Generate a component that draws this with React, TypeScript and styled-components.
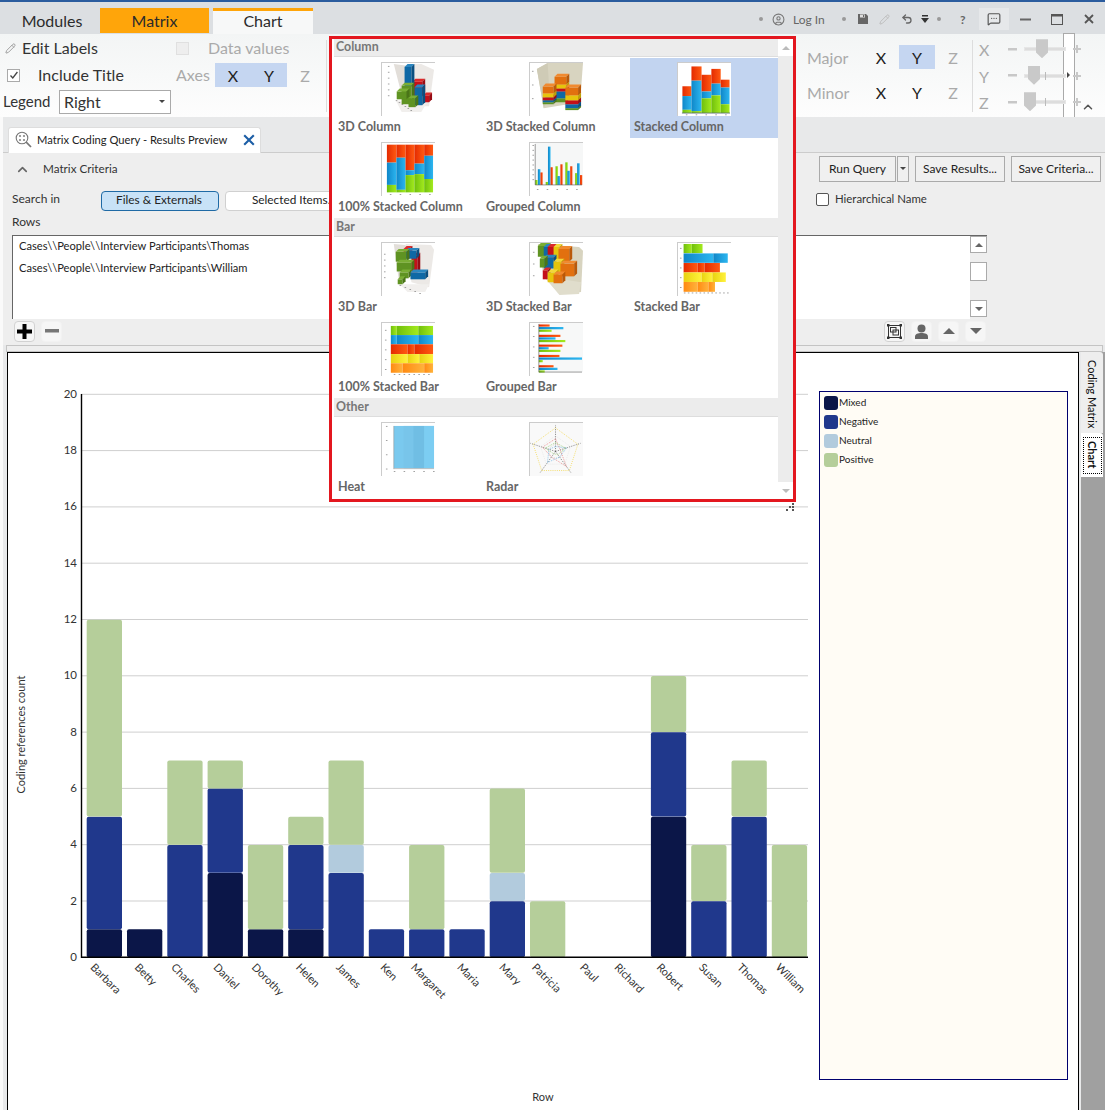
import React from "react";
import styled, { createGlobalStyle } from "styled-components";
import { Pencil, CircleUser, MessageSquareMore, Undo2, ChevronUp } from "lucide-react";

const Global = createGlobalStyle`
  html, body { margin: 0; padding: 0; background: #fff; }
  * { box-sizing: border-box; }
  body { font-family: Lato, "Open Sans", sans-serif; color: #222; }
`;

const Page = styled.div`
  position: relative; width: 1105px; height: 1110px; overflow: hidden;
  display: flex; flex-direction: column; background: #fff;
`;

/* ---------- title bar ---------- */
const TitleBar = styled.div`
  height: 34px; flex: none; display: flex; align-items: flex-end; justify-content: space-between;
  background: #dcdfe2; border-top: 2px solid #2b5c9e;
`;
const Tabs = styled.div`display: flex; align-items: flex-end;`;
const ModuleTab = styled.div<{ $kind?: "plain" | "context" | "active" }>`
  height: ${p => (p.$kind === "active" ? 26 : 25)}px;
  width: ${p => (p.$kind === "context" ? 109 : 100)}px;
  margin-right: ${p => (p.$kind === "context" ? 4 : 0)}px;
  margin-bottom: ${p => (p.$kind === "active" ? 0 : 1)}px;
  padding-bottom: ${p => (p.$kind === "active" ? 4 : 0)}px;
  padding-left: ${p => (p.$kind ? 0 : 4)}px;
  display: flex; align-items: center; justify-content: center;
  font-size: 16px; color: #2b2b2b;
  background: ${p => (p.$kind === "context" ? "#ffa50a" : p.$kind === "active" ? "#f7f8f8" : "transparent")};
  border-top: ${p => (p.$kind === "active" ? "3px solid #ffa50a" : "none")};
`;
const QuickBar = styled.div`
  display: flex; align-items: center; height: 32px; padding-top: 2px; color: #777;
`;
const Dot = styled.span<{ $l?: number; $r?: number }>`
  width: 4px; height: 4px; border-radius: 50%; background: #999;
  margin-left: ${p => p.$l ?? 0}px; margin-right: ${p => p.$r ?? 0}px;
`;
const LogIn = styled.span`font-size: 12px; color: #666; margin-left: 8px; width: 33px;`;
const Help = styled.span`font-size: 12px; font-weight: 700; color: #666; width: 8px; margin: 0 11px 0 19px;`;
const ChatBox = styled.span`
  width: 30px; height: 22px; background: #e6e8ea; display: flex; align-items: center; justify-content: center;
`;
const WinBtn = styled.span`width: 32px; display: flex; justify-content: center; align-items: center; color: #555;`;
const QuickIcon = styled.span<{ $w: number }>`width: ${p => p.$w}px; display: flex; justify-content: center; align-items: center;`;

/* ---------- ribbon ---------- */
const Ribbon = styled.div`
  position: relative; height: 83px; flex: none; display: flex;
  background: linear-gradient(#f3f5f5, #fdfdfd);
`;
const LeftGroup = styled.div`
  width: 327px; display: grid; grid-template-columns: 176px 1fr; grid-template-rows: 29px 24px 30px;
  position: relative;
`;
const RibbonCell = styled.div<{ $pl?: number }>`
  display: flex; align-items: center; padding-left: ${p => p.$pl ?? 0}px; font-size: 16px; color: #333;
`;
const LabelText = styled.span<{ $off?: boolean; $ml?: number; $w?: number; $size?: number }>`
  font-size: ${p => p.$size ?? 16}px; color: ${p => (p.$off ? "#aaa" : "#333")}; margin-left: ${p => p.$ml ?? 0}px;
  padding-bottom: 2px;
  ${p => (p.$w ? `width: ${p.$w}px;` : "")}
`;
const RibbonCheck = styled.span<{ $off?: boolean }>`
  width: 13px; height: 13px; flex: none; display: flex; align-items: center; justify-content: center;
  background: ${p => (p.$off ? "#eeeeee" : "#fff")}; border: 1px solid ${p => (p.$off ? "#e0e0e0" : "#aaa")};
`;
const SelectBox = styled.div`
  width: 112px; height: 24px; margin-left: 7px; padding: 0 5px 2px 4px; border: 1px solid #aaa; background: #fff;
  display: flex; align-items: center; justify-content: space-between; font-size: 16px; color: #333;
`;
const Caret = styled.span<{ $up?: boolean; $c?: string; $s?: number }>`
  width: 0; height: 0; display: inline-block;
  border-left: ${p => p.$s ?? 3}px solid transparent; border-right: ${p => p.$s ?? 3}px solid transparent;
  ${p => (p.$up ? `border-bottom: ${p.$s ?? 3}px solid ${p.$c ?? "#444"};` : `border-top: ${p.$s ?? 3}px solid ${p.$c ?? "#444"};`)}
`;
const AxisCell = styled.span<{ $on?: boolean; $off?: boolean }>`
  width: 36px; height: 24px; display: flex; align-items: center; justify-content: center; font-size: 16px;
  color: ${p => (p.$off ? "#aaa" : "#222")}; background: ${p => (p.$on ? "#c5d6f1" : "transparent")};
`;
const GroupSep = styled.span`position: absolute; right: 0; top: 6px; bottom: 5px; width: 1px; background: #ddd;`;
const MajorGroup = styled.div`
  margin: 6px 0 0 480px; width: 166px; height: 72px; padding-top: 5px; display: flex; flex-direction: column; gap: 11px;
  border-right: 1px solid #ddd;
`;
const MajorRow = styled.div`display: flex; align-items: center; height: 24px;`;
const MajorLabel = styled.span`width: 56px; font-size: 16px; color: #aaa;`;
const SliderGroup = styled.div`
  margin-left: 6px; display: flex; flex-direction: column; padding-top: 2px;
`;
const SliderRow = styled.div`display: flex; align-items: center; height: 26.5px; position: relative;`;
const SliderAxis = styled.span`width: 14px; font-size: 16px; color: #aaa; line-height: 1; padding-top: 2px;`;
const SliderGlyph = styled.svg<{ $ml: number }>`flex: none; margin-left: ${p => p.$ml}px;`;
const Track = styled.span`
  position: relative; display: block; flex: none; width: 42px; height: 4px; margin-left: 7px; background: #ddd; border: 1px solid #e6e6e6;
`;
const Knob = styled.span<{ $at: number }>`
  position: absolute; left: ${p => p.$at}px; top: -9px; width: 12px; height: 19px; background: #c9c9c9;
  clip-path: polygon(0 0, 100% 0, 100% 70%, 50% 100%, 0 70%);
`;
const TickMark = styled.span`position: absolute; left: 20px; top: -3px; width: 1px; height: 8px; background: #bbb;`;
const StripOverlay = styled.span`
  position: absolute; left: 1063px; top: -1px; bottom: 0; width: 12px; background: #fff;
  border-left: 1px solid #aaa; border-right: 1px solid #aaa; border-top: 1px solid #aaa;
`;
const RibbonCollapse = styled.span`position: absolute; left: 1081px; top: 66px; color: #555; display: flex;`;
const SmallArrow = styled.span`
  position: absolute; left: 1067px; top: 38px; width: 0; height: 0;
  border-top: 3px solid transparent; border-bottom: 3px solid transparent; border-left: 3px solid #444;
`;

/* ---------- body ---------- */
const Body = styled.div`
  flex: 1; min-height: 0; display: flex; flex-direction: column; background: #e8e9ea;
  border-left: 3px solid #fafafa;
`;
const TabStrip = styled.div`
  height: 36px; flex: none; display: flex; align-items: flex-end; padding-left: 5px;
  border-bottom: 1px solid #ccc;
`;
const DocTab = styled.div`
  width: 253px; height: 26px; margin-bottom: -1px; background: #fff; border: 1px solid #ddd; border-bottom: none;
  border-radius: 3px 3px 0 0; display: flex; align-items: center; padding: 0 5px 2px 6px; font-size: 11.2px; color: #222;
`;
const DocTitle = styled.span`margin-left: 5px; flex: 1; white-space: nowrap;`;
const Criteria = styled.div`height: 192px; flex: none; background: #eee; display: flex; flex-direction: column;`;
const CritHeader = styled.div`
  height: 36px; flex: none; display: flex; align-items: center; padding: 0 4px 4px 12px; font-size: 11.7px; color: #333;
`;
const CritTitle = styled.span`margin-left: 13px; flex: 1; padding-bottom: 2px;`;
const ActionButton = styled.button<{ $w: number; $ml?: number }>`
  width: ${p => p.$w}px; height: 26px; margin-left: ${p => p.$ml ?? 0}px; padding: 0 0 2px; background: #f0f0f0; border: 1px solid #aaa;
  font: 12px Lato, sans-serif; color: #222; display: flex; align-items: center; justify-content: center;
`;
const SearchRow = styled.div`height: 22px; flex: none; padding: 1px 0 0 9px; display: flex; align-items: center; font-size: 12px; color: #333;`;
const SearchLabel = styled.span`width: 89px; padding-bottom: 4px;`;
const ScopeBtn = styled.button<{ $on?: boolean; $ml?: number }>`
  width: ${p => (p.$on ? 118 : 140)}px; height: 20px; border-radius: 4px; margin-left: ${p => p.$ml ?? 0}px; padding: 0 2px 4px 0;
  font: 11.8px Lato, sans-serif; color: #222; text-align: center;
  background: ${p => (p.$on ? "#c8e2f7" : "#fff")}; border: 1px solid ${p => (p.$on ? "#1f6aa5" : "#d0d0d0")};
`;
const HierCheck = styled.span`
  margin: 0 0 3px 451px; width: 13px; height: 13px; border: 1px solid #555; border-radius: 2px; background: #fff; flex: none;
`;
const HierLabel = styled.span`margin-left: 6px; font-size: 11.4px; padding-bottom: 4px;`;
const RowsLabel = styled.div`height: 24px; flex: none; display: flex; align-items: center; padding: 0 0 4px 9px; font-size: 12px; color: #333;`;
const RowsBox = styled.div`
  height: 84px; flex: none; width: 975px; margin-left: 9px; background: #fff; border-top: 1px solid #666; border-left: 1px solid #666;
  display: flex;
`;
const RowsList = styled.div`flex: 1; padding: 2px 6px; font-size: 11.15px; color: #222; display: flex; flex-direction: column; gap: 7px; line-height: 15px;`;
const RowsScroll = styled.div`width: 17px; background: #eee; display: flex; flex-direction: column; align-items: center; padding-bottom: 2px;`;
const ScrollBtn = styled.span<{ $h?: number; $mt?: number }>`
  width: 17px; height: ${p => p.$h ?? 17}px; margin-top: ${p => p.$mt ?? 0}px; background: #fff; border: 1px solid #aaa; display: flex; align-items: center; justify-content: center;
`;
const Toolbar = styled.div`height: 23px; flex: none; display: flex; align-items: center; padding: 1px 0 0 11px;`;
const ToolBtn = styled.span<{ $on?: boolean; $ml?: number }>`
  width: 21px; height: 21px; margin-left: ${p => p.$ml ?? 0}px; border-radius: 4px; background: #f6f6f6;
  border: 1px solid ${p => (p.$on ? "#d2d2d2" : "#f2f2f2")}; display: flex; align-items: center; justify-content: center;
`;
const Splitter = styled.div`height: 7px; flex: none; margin: 0 2px 0 3px; background: #eee; border: 1px solid #c4c4c4;`;
const ChartRow = styled.div`flex: 1; min-height: 0; display: flex; padding-left: 4px;`;
const ChartFrame = styled.div`
  width: 1072px; flex: none; background: #fff; border: 1px solid #000; border-bottom: none; display: flex; align-items: flex-start;
`;
const ChartSvg = styled.svg`display: block; flex: none;`;
const Legend = styled.div`
  width: 249px; height: 689px; margin: 38px 0 0 6px; flex: none; background: #fffcf5; border: 1px solid #00006e;
  padding: 4px 4px; display: flex; flex-direction: column; gap: 5px;
`;
const LegendItem = styled.div`display: flex; align-items: center; height: 14px; font-size: 10px; color: #222; gap: 1px;`;
const LegendName = styled.span`padding-bottom: 2px;`;
const Swatch = styled.span<{ $c: string }>`width: 14px; height: 14px; border-radius: 3px; background: ${p => p.$c};`;
const Rail = styled.div`flex: 1; background: #a0a0a0; display: flex; flex-direction: column; padding-right: 3px; margin-left: 2px;`;
const RailTab = styled.div<{ $on?: boolean }>`
  width: 22px; height: ${p => (p.$on ? 44 : 81)}px; padding-top: ${p => (p.$on ? 0 : 3)}px; background: ${p => (p.$on ? "#fff" : "#eeeeee")};
  display: flex; align-items: center; justify-content: center; writing-mode: vertical-rl;
  font-size: 11px; font-weight: ${p => (p.$on ? 700 : 400)}; color: #111; border-radius: 0 3px 0 0;
`;
const RailFocus = styled.span`
  width: 19px; height: 37px; display: flex; align-items: center; justify-content: center; border: 1px dotted #000;
`;

/* ---------- gallery popup ---------- */
const Popup = styled.div`
  position: absolute; left: 329px; top: 36px; width: 467px; height: 466px; z-index: 10;
  background: #fff; border: 3px solid #e3171f; display: flex; padding-left: 2px;
`;
const GalleryList = styled.div`width: 444px; flex: none;`;
const SectionHead = styled.div`
  height: 19px; margin-bottom: 1px; background: #ececec; border-bottom: 1px solid #ddd; padding: 0 0 2px 2px;
  font-size: 12.4px; font-weight: 700; color: #777; display: flex; align-items: center;
`;
const FirstHead = styled(SectionHead)`height: 18px; margin-bottom: 1px;`;
const GalleryGrid = styled.div`display: grid; grid-template-columns: repeat(3, 148px); grid-auto-rows: 80px;`;
const GalleryItem = styled.div<{ $on?: boolean }>`
  padding-top: 4px; display: flex; flex-direction: column; background: ${p => (p.$on ? "#c2d4f0" : "transparent")};
`;
const ThumbSvg = styled.svg`
  display: block; margin: 0 auto; width: 54px; height: 54px; background: #fff; border-top: 1px solid #ccc; border-left: 1px solid #ccc;
`;
const ItemLabel = styled.span`
  padding: 2px 0 0 4px; font-size: 12.5px; font-weight: 700; color: #666; line-height: 18px; white-space: nowrap;
`;
const GalleryScroll = styled.div`width: 15px; flex: none; background: #ececec; display: flex; flex-direction: column; justify-content: space-between; height: 460px;`;
const GalleryBtn = styled.span`height: 17px; background: #fff; display: flex; align-items: center; justify-content: center;`;
const Grip = styled.svg`position: absolute; right: -2px; bottom: -13px;`;

/* ---------- thumbnails ---------- */
const GRADS: Record<string, [string, string]> = {
  r: ["#e42a00", "#ff5a12"], b: ["#0f86c8", "#2cb6f0"], g: ["#6fbf0c", "#a3ea1e"], y: ["#e8d210", "#fff23c"], o: ["#ff8a12", "#ffb33c"],
};
const Thumb: React.FC<{ id: string; children?: React.ReactNode }> = ({ id, children }) => (
  <ThumbSvg viewBox="0 0 54 54">
    <defs>
      {Object.entries(GRADS).map(([k, [a, c]]) => (
        <linearGradient key={k} id={`${id}${k}`} x1="0" x2="1" y1="0" y2="0">
          <stop offset="0" stopColor={a} />
          <stop offset="1" stopColor={c} />
        </linearGradient>
      ))}
    </defs>
    {children}
  </ThumbSvg>
);
const Block: React.FC<{ x: number; y: number; w: number; h: number; c: string; side: string; top: string; d?: number }> = ({ x, y, w, h, c, side, top, d = 3 }) => (
  <g>
    <rect x={x} y={y} width={w} height={h} fill={c} />
    <polygon points={`${x},${y} ${x + d},${y - d} ${x + w + d},${y - d} ${x + w},${y}`} fill={top} />
    <polygon points={`${x + w},${y} ${x + w + d},${y - d} ${x + w + d},${y + h - d} ${x + w},${y + h}`} fill={side} />
  </g>
);
const C3 = {
  blue: { c: "#0f68a5", side: "#0b4f80", top: "#2a86c0" },
  green: { c: "#5f9322", side: "#4a7518", top: "#7aae35" },
  red: { c: "#c4101a", side: "#980c14", top: "#dc2a2a" },
  orange: { c: "#e2700f", side: "#b9590a", top: "#f08a30" },
  yellow: { c: "#e6c40c", side: "#bda008", top: "#f2d83a" },
};
const Stack2D: React.FC<{ id: string; x: number; w: number; parts: [string, number, number][]; }> = ({ id, x, w, parts }) => (
  <>{parts.map(([k, a, c], i) => <rect key={i} x={x} y={a} width={w} height={c - a} fill={`url(#${id}${k})`} />)}</>
);
const SegRow: React.FC<{ id: string; k: string; y: number; h: number; cuts: number[] }> = ({ id, k, y, h, cuts }) => (
  <>{cuts.slice(0, -1).map((x, i) => <rect key={i} x={x} y={y} width={cuts[i + 1] - x} height={h} fill={`url(#${id}${k})`} />)}</>
);
const TinyAxis: React.FC<{ x: number; y: number; r?: number }> = ({ x, y, r = 53 }) => (
  <g stroke="#555" strokeWidth="0.6"><line x1={x} y1={1} x2={x} y2={y} /><line x1={x} y1={y} x2={r} y2={y} /></g>
);
const Dashes: React.FC<{ x: number; y: number; n: number; dx?: number; dy?: number }> = ({ x, y, n, dx = 0, dy = 0 }) => (
  <>{Array.from({ length: n }).map((_, i) => <rect key={i} x={x + i * dx} y={y + i * dy} width="1.6" height="0.8" fill="#888" />)}</>
);
const Walls: React.FC<{ left: string; right: string; floor?: string }> = ({ left, right, floor }) => (
  <g>
    <polygon points={left} fill="#e2ded9" />
    <polygon points={right} fill="#ece9e6" />
    {floor && <polygon points={floor} fill="#f1efed" />}
  </g>
);

const Thumb3DColumn = () => (
  <Thumb id="a">
    <Walls left="12,1 28,3 36,26 22,40" right="28,1 40,1 53,7 48,44 30,44" floor="14,38 46,40 40,50 20,50" />
    <Dashes x={6} y={3} n={6} dy={6} />
    <Dashes x={14} y={38} n={6} dx={3} dy={2} />
    <Block x={31} y={19} w={10} h={15} {...C3.red} />
    <Block x={42} y={33} w={6} h={7} {...C3.red} />
    <Block x={23} y={4} w={7} h={20} {...C3.blue} />
    <Block x={33} y={25} w={8} h={18} {...C3.blue} />
    <Block x={20} y={23} w={10} h={19} {...C3.green} />
    <Block x={15} y={29} w={10} h={8} {...C3.green} />
    <Block x={27} y={36} w={7} h={9} {...C3.green} />
  </Thumb>
);
const Thumb3DStackCol = () => {
  const stack = (x: number, y: number, w: number, hs: [keyof typeof C3, number][]) => {
    let cy = y;
    return hs.map(([k, h], i) => {
      const el = <Block key={i} x={x} y={cy} w={w} h={h} {...C3[k]} />;
      cy += h;
      return el;
    }).reverse();
  };
  return (
    <Thumb id="b">
      <polygon points="7,6 18,0 54,0 51,40 14,46" fill="#d8d4c0" />
      <polygon points="7,6 18,0 20,34 14,46" fill="#cfcbb6" />
      <Dashes x={2} y={8} n={3} dy={14} />
      {stack(25, 14, 12, [["orange", 8], ["yellow", 4], ["red", 3], ["blue", 7], ["green", 4]])}
      {stack(13, 24, 11, [["orange", 7], ["yellow", 4], ["red", 3], ["blue", 2], ["green", 2]])}
      {stack(36, 25, 13, [["orange", 8], ["yellow", 5], ["red", 4], ["blue", 4], ["green", 2]])}
    </Thumb>
  );
};
const ThumbStackedCol = () => {
  const xs = [4.5, 13.7, 24, 34, 43.5];
  const ws = [9.2, 10.3, 10, 9.5, 9];
  const d: [string, number, number][][] = [
    [["r", 23.7, 33.7], ["b", 33.7, 47.7], ["g", 47.7, 51]],
    [["r", 3.5, 18], ["b", 18, 49], ["g", 49, 51]],
    [["r", 12, 29], ["b", 29, 36], ["g", 36, 51]],
    [["r", 6, 21], ["b", 21, 33], ["g", 33, 51]],
    [["r", 17, 25], ["b", 25, 42], ["g", 42, 51]],
  ];
  return (
    <Thumb id="c">
      {xs.map((x, i) => <Stack2D key={i} id="c" x={x} w={ws[i]} parts={d[i]} />)}
      <line x1="4" y1="51" x2="53" y2="51" stroke="#567" strokeWidth="0.8" />
      <Dashes x={8} y={52.4} n={5} dx={10} />
    </Thumb>
  );
};
const Thumb100Col = () => {
  const xs = [5, 14.7, 24, 33, 43];
  const d: [string, number, number][][] = [
    [["r", 1.7, 20], ["b", 20, 42.7], ["g", 42.7, 50.3]],
    [["r", 1.7, 15], ["b", 15, 47.7], ["g", 47.7, 50.3]],
    [["r", 1.7, 27.7], ["b", 27.7, 32.7], ["g", 32.7, 50.3]],
    [["r", 1.7, 21], ["b", 21, 31.7], ["g", 31.7, 50.3]],
    [["r", 1.7, 13], ["b", 13, 36.7], ["g", 36.7, 50.3]],
  ];
  return (
    <Thumb id="d">
      {xs.map((x, i) => <Stack2D key={i} id="d" x={x} w={i === 4 ? 9 : xs[i + 1] - x} parts={d[i]} />)}
      <Dashes x={8} y={52} n={5} dx={10} />
    </Thumb>
  );
};
const ThumbGroupedCol = () => {
  const g: [number, number, number, number, number, number][] = [
    [5.3, 37.7, 8, 26.7, 10.7, 30],
    [16, 39.7, 18.3, 3.7, 21, 24.7],
    [26, 23.7, 28, 33.7, 31, 21.7],
    [36, 19.7, 38, 28.3, 41, 23.7],
    [46, 30.7, 48, 20.7, 51, 32.7],
  ];
  return (
    <Thumb id="e">
      <rect x="5" y="0" width="49" height="42.7" fill="#f6f7f7" />
      {g.map(([gx, gy, bx, by, rx, ry], i) => (
        <g key={i}>
          <rect x={gx} y={gy} width="2.4" height={42.7 - gy} fill="url(#eg)" />
          <rect x={bx} y={by} width="2.6" height={42.7 - by} fill="url(#eb)" />
          <rect x={rx} y={ry} width="2.2" height={42.7 - ry} fill="url(#er)" />
        </g>
      ))}
      <TinyAxis x={5.3} y={42.7} />
      <Dashes x={2.5} y={2} n={8} dy={5} />
      <Dashes x={7} y={47} n={5} dx={10} />
    </Thumb>
  );
};
const Thumb3DBar = () => (
  <Thumb id="f">
    <Walls left="12,1 24,2 30,26 18,44" right="24,1 50,2 53,7 48,45 30,40" floor="18,42 48,42 44,50 26,50" />
    <Dashes x={2} y={11} n={5} dy={6} />
    <Block x={22} y={6} w={6} h={5} {...C3.red} />
    <Block x={30} y={13} w={6} h={17} {...C3.red} />
    <Block x={24} y={8} w={11} h={8} {...C3.blue} />
    <Block x={14} y={9} w={11} h={10} {...C3.green} />
    <Block x={15} y={20} w={15} h={9} {...C3.green} />
    <Block x={18} y={30} w={9} h={6} {...C3.green} />
    <Block x={16} y={37} w={5} h={5} {...C3.green} />
    <Block x={29} y={30} w={15} h={7} {...C3.blue} />
    <Dashes x={18} y={43} n={5} dx={5} dy={2} />
  </Thumb>
);
const Thumb3DStackBar = () => (
  <Thumb id="h">
    <polygon points="8,1 50,4 54,8 52,50 30,52 14,34" fill="#d8d4c0" />
    <polygon points="14,34 52,40 50,52 30,53" fill="#e0ddcc" />
    <Dashes x={3} y={9} n={3} dy={12} />
    <Block x={8} y={3} w={10} h={11} {...C3.green} />
    <Block x={14} y={4} w={6} h={10} {...C3.blue} />
    <Block x={18} y={4} w={8} h={13} {...C3.red} />
    <Block x={24} y={4} w={6} h={14} {...C3.yellow} />
    <Block x={29} y={6} w={11} h={13} {...C3.orange} />
    <Block x={14} y={15} w={10} h={11} {...C3.blue} />
    <Block x={10} y={16} w={5} h={9} {...C3.green} />
    <Block x={24} y={19} w={8} h={11} {...C3.yellow} />
    <Block x={31} y={21} w={14} h={13} {...C3.orange} />
    <Block x={13} y={28} w={5} h={9} {...C3.red} />
    <Block x={18} y={30} w={8} h={10} {...C3.yellow} />
    <Block x={24} y={32} w={9} h={9} {...C3.orange} />
  </Thumb>
);
const ThumbStackedBar = () => (
  <Thumb id="i">
    <SegRow id="i" k="g" y={1} h={9.3} cuts={[5.7, 14, 25]} />
    <SegRow id="i" k="b" y={10.6} h={9.6} cuts={[5.7, 36, 50.7]} />
    <SegRow id="i" k="r" y={20.4} h={9.6} cuts={[5.7, 20, 27, 42.7]} />
    <SegRow id="i" k="y" y={30} h={9.7} cuts={[5.7, 24, 35, 48.7]} />
    <SegRow id="i" k="o" y={39.7} h={10} cuts={[5.7, 20, 31, 37.7]} />
    <Dashes x={2} y={5} n={5} dy={10} />
    <Dashes x={6} y={50.5} n={12} dx={4} />
  </Thumb>
);
const Thumb100Bar = () => (
  <Thumb id="j">
    <SegRow id="j" k="g" y={3} h={9.3} cuts={[9, 15, 37, 52]} />
    <SegRow id="j" k="b" y={12.3} h={9.4} cuts={[9, 15, 37, 52]} />
    <SegRow id="j" k="r" y={21.7} h={10} cuts={[9, 26, 33, 52]} />
    <SegRow id="j" k="y" y={31.7} h={9.3} cuts={[9, 26, 38, 52]} />
    <SegRow id="j" k="o" y={41} h={9.7} cuts={[9, 21, 43, 52]} />
    <Dashes x={3} y={7} n={5} dy={10} />
    <Dashes x={12} y={52} n={8} dx={5} />
  </Thumb>
);
const ThumbGroupedBar = () => {
  const g: [number, number, number][] = [[20, 34, 22], [31, 26, 36], [33, 19, 31], [30, 53, 13], [24, 28, 15]];
  const ys = [1.5, 12, 22, 32.5, 43];
  return (
    <Thumb id="k">
      <rect x="9" y="0" width="45" height="50" fill="#f7f8f8" />
      {g.map(([a, c, e], i) => (
        <g key={i}>
          <rect x="9" y={ys[i]} width={a - 9} height="2.2" fill="url(#kr)" />
          <rect x="9" y={ys[i] + 2.6} width={c - 9} height="2.3" fill="url(#kb)" />
          <rect x="9" y={ys[i] + 5.3} width={e - 9} height="2.2" fill="url(#kg)" />
        </g>
      ))}
      <TinyAxis x={9} y={50} />
      <Dashes x={3} y={3} n={5} dy={10.5} />
    </Thumb>
  );
};
const ThumbHeat = () => (
  <Thumb id="l">
    <rect x="12" y="3" width="41" height="43" fill="#7ac9ee" />
    <rect x="22" y="3" width="10" height="43" fill="#78c5ea" />
    <rect x="32" y="3" width="11" height="43" fill="#70bee4" />
    <rect x="43" y="3" width="10" height="43" fill="#7ccdf2" />
    <line x1="12" y1="3" x2="12" y2="47" stroke="#999" strokeWidth=".6" />
    <line x1="12" y1="46.5" x2="53" y2="46.5" stroke="#999" strokeWidth=".6" />
    <Dashes x={4} y={3} n={4} dy={14.5} />
    <Dashes x={12} y={49} n={5} dx={10} />
  </Thumb>
);
const ThumbRadar = () => {
  const pts = [-90, -18, 54, 126, 198].map(a => [Math.cos((a * Math.PI) / 180), Math.sin((a * Math.PI) / 180)]);
  const poly = (rs: number[]) => pts.map(([x, y], i) => `${26 + x * rs[i]},${29 + y * rs[i]}`).join(" ");
  return (
    <Thumb id="m">
      <rect width="54" height="54" fill="#f9f9f9" />
      {pts.map(([x, y], i) => <line key={i} x1="26" y1="29" x2={26 + x * 27} y2={29 + y * 27} stroke="#444" strokeWidth=".6" strokeDasharray="1.2 1.2" />)}
      <polygon points={poly([8, 8, 8, 8, 8])} fill="none" stroke="#bbb" strokeWidth=".5" strokeDasharray="1 1" />
      <polygon points={poly([16, 16, 16, 16, 16])} fill="none" stroke="#ddd" strokeWidth=".5" strokeDasharray="1 1" />
      <polygon points={poly([24, 24, 24, 24, 24])} fill="none" stroke="#f2d84e" strokeWidth=".8" strokeDasharray="1 1.2" />
      <polygon points={poly([13, 5, 19, 7, 14])} fill="none" stroke="#e05a5a" strokeWidth=".6" strokeDasharray="1 1" />
      <polygon points={poly([5, 12, 7, 14, 7])} fill="none" stroke="#4ca0dc" strokeWidth=".6" strokeDasharray="1 1" />
      <polygon points={poly([9, 11, 4, 3, 11])} fill="none" stroke="#7cc04a" strokeWidth=".6" strokeDasharray="1 1" />
    </Thumb>
  );
};

type GItem = { label: string; thumb: React.ReactNode; on?: boolean };
const COLUMN: GItem[] = [
  { label: "3D Column", thumb: <Thumb3DColumn /> },
  { label: "3D Stacked Column", thumb: <Thumb3DStackCol /> },
  { label: "Stacked Column", thumb: <ThumbStackedCol />, on: true },
  { label: "100% Stacked Column", thumb: <Thumb100Col /> },
  { label: "Grouped Column", thumb: <ThumbGroupedCol /> },
];
const BAR: GItem[] = [
  { label: "3D Bar", thumb: <Thumb3DBar /> },
  { label: "3D Stacked Bar", thumb: <Thumb3DStackBar /> },
  { label: "Stacked Bar", thumb: <ThumbStackedBar /> },
  { label: "100% Stacked Bar", thumb: <Thumb100Bar /> },
  { label: "Grouped Bar", thumb: <ThumbGroupedBar /> },
];
const OTHER: GItem[] = [
  { label: "Heat", thumb: <ThumbHeat /> },
  { label: "Radar", thumb: <ThumbRadar /> },
];
const Items: React.FC<{ items: GItem[] }> = ({ items }) => (
  <GalleryGrid>
    {items.map(i => (
      <GalleryItem key={i.label} $on={i.on}>
        {i.thumb}
        <ItemLabel>{i.label}</ItemLabel>
      </GalleryItem>
    ))}
  </GalleryGrid>
);

/* ---------- chart data ---------- */
const COLORS = { mixed: "#0b1648", neg: "#20388c", neu: "#b2cbdd", pos: "#b5ce9a" };
const PEOPLE: [string, number, number, number, number][] = [
  ["Barbara", 1, 4, 0, 7], ["Betty", 1, 0, 0, 0], ["Charles", 0, 4, 0, 3], ["Daniel", 3, 3, 0, 1],
  ["Dorothy", 1, 0, 0, 3], ["Helen", 1, 3, 0, 1], ["James", 0, 3, 1, 3], ["Ken", 0, 1, 0, 0],
  ["Margaret", 0, 1, 0, 3], ["Maria", 0, 1, 0, 0], ["Mary", 0, 2, 1, 3], ["Patricia", 0, 0, 0, 2],
  ["Paul", 0, 0, 0, 0], ["Richard", 0, 0, 0, 0], ["Robert", 5, 3, 0, 2], ["Susan", 0, 2, 0, 2],
  ["Thomas", 0, 5, 0, 2], ["William", 0, 0, 0, 4],
];
const Y0 = 957.3, UNIT = 28.15;

const Chart = () => (
  <ChartSvg width={805} height={757} viewBox="8 353 805 757">
    {Array.from({ length: 11 }).map((_, i) => {
      const v = i * 2, y = Y0 - v * UNIT;
      return (
        <g key={v}>
          {v > 0 && <line x1="81" x2="808" y1={y} y2={y} stroke="#cfcfcf" />}
          <text x="77" y={y + 3.5} textAnchor="end" fontSize="11.5" fontFamily="Lato, sans-serif" fill="#333">{v}</text>
        </g>
      );
    })}
    {PEOPLE.map(([name, m, n, u, p], i) => {
      const x = 86.7 + i * 40.3;
      const labelX = x + 17.6 - 1 - name.length * 5.5 * 0.35;
      let base = 0;
      const segs = ([[m, COLORS.mixed], [n, COLORS.neg], [u, COLORS.neu], [p, COLORS.pos]] as [number, string][]).filter(s => s[0] > 0);
      return (
        <g key={name}>
          {segs.map(([v, c], k) => {
            const y = Y0 - (base + v) * UNIT;
            base += v;
            return <rect key={k} x={x} y={y + 0.2} width="35.3" height={v * UNIT - 0.2} rx="2" fill={c} />;
          })}
          <text transform={`translate(${labelX} 968) rotate(45)`} fontSize="11" fontFamily="Lato, sans-serif" fill="#333">{name}</text>
        </g>
      );
    })}
    <line x1="81.5" x2="81.5" y1="394" y2={Y0 + 0.7} stroke="#000" strokeWidth="1.4" />
    <line x1="81" x2="808" y1={Y0} y2={Y0} stroke="#000" strokeWidth="1.4" />
    <text transform="translate(25 734.5) rotate(-90)" textAnchor="middle" fontSize="11" fontFamily="Lato, sans-serif" fill="#333">Coding references count</text>
    <text x="543" y="1101" textAnchor="middle" fontSize="11" fontFamily="Lato, sans-serif" fill="#333">Row</text>
  </ChartSvg>
);

/* ---------- small drawn icons ---------- */
const SaveIcon = () => (
  <svg width="10" height="10" viewBox="0 0 10 10"><path d="M0 0h8l2 2v8H0z" fill="#666" /><rect x="2" y="0.5" width="5" height="3" fill="#ddd" /><rect x="5" y="1" width="1.2" height="2" fill="#666" /></svg>
);
const QatDrop = () => (
  <svg width="8" height="9" viewBox="0 0 8 9"><rect x="1" y="0" width="6" height="1.5" fill="#333" /><path d="M0 3h8L4 8z" fill="#333" /></svg>
);
const MinIcon = () => <svg width="11" height="3"><rect width="11" height="2" y="0.5" fill="#666" /></svg>;
const MaxIcon = () => <svg width="12" height="11"><rect x="0.5" y="0.5" width="11" height="10" fill="none" stroke="#555" /><rect width="12" height="2.5" fill="#555" /></svg>;
const CloseIcon = () => <svg width="10" height="10"><path d="M1 1l8 8M9 1l-8 8" stroke="#555" strokeWidth="1.8" /></svg>;
const CheckTick = () => <svg width="10" height="9"><path d="M1.5 4.5l2.3 2.5 4.6-6" fill="none" stroke="#444" strokeWidth="1.3" /></svg>;
const QueryIcon = () => (
  <svg width="17" height="17" viewBox="0 0 17 17">
    <circle cx="7" cy="7" r="5.8" fill="none" stroke="#777" strokeWidth="1.1" />
    <path d="M11.2 11.2L16 16" stroke="#777" strokeWidth="1.7" />
    <g fill="#888"><circle cx="5" cy="5" r="1.1" /><circle cx="9" cy="5" r="1.1" /><circle cx="5" cy="9" r="1.1" /><circle cx="9" cy="9" r="1.1" /></g>
  </svg>
);
const BlueClose = () => <svg width="12" height="12"><path d="M1.2 1.2l9.6 9.6M10.8 1.2l-9.6 9.6" stroke="#1c5ea6" strokeWidth="2.1" /></svg>;
const PlusIcon = () => <svg width="15" height="15"><path d="M5.5 0h4v5.5H15v4H9.5V15h-4V9.5H0v-4h5.5z" fill="#000" /></svg>;
const MinusIcon = () => <svg width="14" height="4"><rect width="14" height="3.5" fill="#777" /></svg>;
const FrameIcon = () => (
  <svg width="15" height="15" viewBox="0 0 15 15">
    <rect x="1.5" y="1.5" width="12" height="12" fill="none" stroke="#333" />
    <rect x="3.5" y="3.5" width="5.5" height="4.5" fill="none" stroke="#333" />
    <rect x="6" y="6" width="5.5" height="5" fill="none" stroke="#333" />
    <g fill="#333"><rect width="2.5" height="2.5" /><rect x="12.5" width="2.5" height="2.5" /><rect y="12.5" width="2.5" height="2.5" /><rect x="12.5" y="12.5" width="2.5" height="2.5" /></g>
  </svg>
);
const PersonIcon = () => (
  <svg width="15" height="15" viewBox="0 0 15 15"><circle cx="7.5" cy="4.5" r="4" fill="#666" /><path d="M1 15v-2.5C1 10 4 9 7.5 9S14 10 14 12.5V15z" fill="#666" /></svg>
);

const Slider: React.FC<{ axis: string; at: number; tick?: boolean }> = ({ axis, at, tick }) => (
  <SliderRow>
    <SliderAxis>{axis}</SliderAxis>
    <SliderGlyph $ml={15} width="9" height="3"><rect width="9" height="2.5" fill="#c8c8c8" /></SliderGlyph>
    <Track>
      <Knob $at={at} />
      {tick && <TickMark />}
    </Track>
    <SliderGlyph $ml={7} width="8" height="8"><path d="M3 0h2v3h3v2H5v3H3V5H0V3h3z" fill="#c8c8c8" /></SliderGlyph>
  </SliderRow>
);

export default function App() {
  return (
    <Page>
      <Global />
      <TitleBar>
        <Tabs>
          <ModuleTab>Modules</ModuleTab>
          <ModuleTab $kind="context">Matrix</ModuleTab>
          <ModuleTab $kind="active">Chart</ModuleTab>
        </Tabs>
        <QuickBar>
          <Dot $r={9} />
          <CircleUser size={13} color="#777" />
          <LogIn>Log In</LogIn>
          <Dot $l={16} $r={11} />
          <QuickIcon $w={12}><SaveIcon /></QuickIcon>
          <QuickIcon $w={30}><Pencil size={11} color="#bbb" /></QuickIcon>
          <QuickIcon $w={16}><Undo2 size={12} color="#666" strokeWidth={2.6} /></QuickIcon>
          <QuickIcon $w={20}><QatDrop /></QuickIcon>
          <Dot $l={2} />
          <Help>?</Help>
          <ChatBox><MessageSquareMore size={14} color="#555" /></ChatBox>
          <WinBtn><MinIcon /></WinBtn>
          <WinBtn><MaxIcon /></WinBtn>
          <WinBtn><CloseIcon /></WinBtn>
        </QuickBar>
      </TitleBar>

      <Ribbon>
        <StripOverlay />
        <LeftGroup>
          <RibbonCell $pl={5}>
            <Pencil size={11} color="#999" />
            <LabelText $ml={6}>Edit Labels</LabelText>
          </RibbonCell>
          <RibbonCell>
            <RibbonCheck $off />
            <LabelText $off $ml={19}>Data values</LabelText>
          </RibbonCell>
          <RibbonCell $pl={7}>
            <RibbonCheck><CheckTick /></RibbonCheck>
            <LabelText $ml={18}>Include Title</LabelText>
          </RibbonCell>
          <RibbonCell>
            <LabelText $off $w={39}>Axes</LabelText>
            <AxisCell $on>X</AxisCell>
            <AxisCell $on>Y</AxisCell>
            <AxisCell $off>Z</AxisCell>
          </RibbonCell>
          <RibbonCell $pl={3}>
            <LabelText $w={49} $size={15}>Legend</LabelText>
            <SelectBox>Right<Caret /></SelectBox>
          </RibbonCell>
          <GroupSep />
        </LeftGroup>
        <MajorGroup>
          <MajorRow>
            <MajorLabel>Major</MajorLabel>
            <AxisCell>X</AxisCell><AxisCell $on>Y</AxisCell><AxisCell $off>Z</AxisCell>
          </MajorRow>
          <MajorRow>
            <MajorLabel>Minor</MajorLabel>
            <AxisCell>X</AxisCell><AxisCell>Y</AxisCell><AxisCell $off>Z</AxisCell>
          </MajorRow>
        </MajorGroup>
        <SliderGroup>
          <Slider axis="X" at={11} />
          <Slider axis="Y" at={3} tick />
          <Slider axis="Z" at={-1} tick />
        </SliderGroup>
        <SmallArrow />
        <RibbonCollapse><ChevronUp size={14} strokeWidth={2.6} /></RibbonCollapse>
      </Ribbon>

      <Body>
        <TabStrip>
          <DocTab>
            <QueryIcon />
            <DocTitle>Matrix Coding Query - Results Preview</DocTitle>
            <BlueClose />
          </DocTab>
        </TabStrip>
        <Criteria>
          <CritHeader>
            <ChevronUp size={15} color="#666" strokeWidth={2.6} />
            <CritTitle>Matrix Criteria</CritTitle>
            <ActionButton $w={77}>Run Query</ActionButton>
            <ActionButton $w={12} $ml={1}><Caret /></ActionButton>
            <ActionButton $w={90} $ml={6}>Save Results...</ActionButton>
            <ActionButton $w={90} $ml={6}>Save Criteria...</ActionButton>
          </CritHeader>
          <SearchRow>
            <SearchLabel>Search in</SearchLabel>
            <ScopeBtn $on>Files &amp; Externals</ScopeBtn>
            <ScopeBtn $ml={6}>Selected Items...</ScopeBtn>
            <HierCheck />
            <HierLabel>Hierarchical Name</HierLabel>
          </SearchRow>
          <RowsLabel>Rows</RowsLabel>
          <RowsBox>
            <RowsList>
              <span>Cases\\People\\Interview Participants\Thomas</span>
              <span>Cases\\People\\Interview Participants\William</span>
            </RowsList>
            <RowsScroll>
              <ScrollBtn><Caret $up $c="#666" $s={4} /></ScrollBtn>
              <ScrollBtn $h={19} $mt={9} />
              <ScrollBtn $mt={19}><Caret $c="#666" $s={4} /></ScrollBtn>
            </RowsScroll>
          </RowsBox>
          <Toolbar>
            <ToolBtn $on><PlusIcon /></ToolBtn>
            <ToolBtn $ml={6}><MinusIcon /></ToolBtn>
            <ToolBtn $on $ml={822}><FrameIcon /></ToolBtn>
            <ToolBtn $ml={6}><PersonIcon /></ToolBtn>
            <ToolBtn $ml={6}><Caret $up $c="#666" $s={6} /></ToolBtn>
            <ToolBtn $ml={6}><Caret $c="#666" $s={6} /></ToolBtn>
          </Toolbar>
        </Criteria>
        <Splitter />
        <ChartRow>
          <ChartFrame>
            <Chart />
            <Legend>
              <LegendItem><Swatch $c={COLORS.mixed} /><LegendName>Mixed</LegendName></LegendItem>
              <LegendItem><Swatch $c={COLORS.neg} /><LegendName>Negative</LegendName></LegendItem>
              <LegendItem><Swatch $c={COLORS.neu} /><LegendName>Neutral</LegendName></LegendItem>
              <LegendItem><Swatch $c={COLORS.pos} /><LegendName>Positive</LegendName></LegendItem>
            </Legend>
          </ChartFrame>
          <Rail>
            <RailTab>Coding Matrix</RailTab>
            <RailTab $on><RailFocus>Chart</RailFocus></RailTab>
          </Rail>
        </ChartRow>
      </Body>

      <Popup>
        <GalleryList>
          <FirstHead>Column</FirstHead>
          <Items items={COLUMN} />
          <SectionHead>Bar</SectionHead>
          <Items items={BAR} />
          <SectionHead>Other</SectionHead>
          <Items items={OTHER} />
        </GalleryList>
        <GalleryScroll>
          <GalleryBtn><Caret $up $c="#bbb" $s={4} /></GalleryBtn>
          <GalleryBtn><Caret $c="#bbb" $s={4} /></GalleryBtn>
        </GalleryScroll>
        <Grip width="9" height="9" viewBox="0 0 9 9">
          <g fill="#555"><rect x="6" y="0" width="2" height="2" /><rect x="3" y="3" width="2" height="2" /><rect x="6" y="3" width="2" height="2" /><rect x="0" y="6" width="2" height="2" /><rect x="6" y="6" width="2" height="2" /></g>
        </Grip>
      </Popup>
    </Page>
  );
}
